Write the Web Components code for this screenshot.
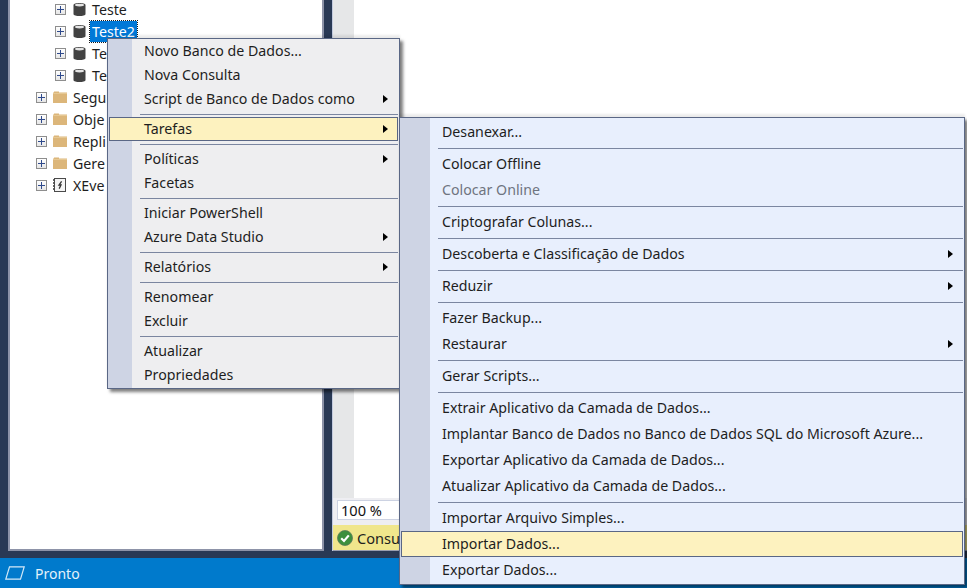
<!DOCTYPE html>
<html lang="pt-BR">
<head>
<meta charset="utf-8">
<title>SSMS</title>
<style>
  html, body { margin: 0; height: 100%; overflow: hidden; background: #293955; }
  body { font-family: "Noto Sans", "Open Sans", sans-serif; }
</style>
</head>
<body>
<ssms-app>
  <object-tree slot="tree">
    <tree-node level="2" icon="db">Teste</tree-node>
    <tree-node level="2" icon="db" selected>Teste2</tree-node>
    <tree-node level="2" icon="db">Te</tree-node>
    <tree-node level="2" icon="db">Te</tree-node>
    <tree-node level="1" icon="folder">Segu</tree-node>
    <tree-node level="1" icon="folder">Obje</tree-node>
    <tree-node level="1" icon="folder">Repli</tree-node>
    <tree-node level="1" icon="folder">Gere</tree-node>
    <tree-node level="1" icon="xevent">XEve</tree-node>
  </object-tree>
  <query-pane slot="pane"></query-pane>
  <status-bar slot="status">Pronto</status-bar>

  <context-menu slot="menus" style="left:107px;top:38px;width:293px" tone="gray">
    <menu-item>Novo Banco de Dados...</menu-item>
    <menu-item>Nova Consulta</menu-item>
    <menu-item arrow>Script de Banco de Dados como</menu-item>
    <menu-sep></menu-sep>
    <menu-item arrow active>Tarefas</menu-item>
    <menu-sep></menu-sep>
    <menu-item arrow>Políticas</menu-item>
    <menu-item>Facetas</menu-item>
    <menu-sep></menu-sep>
    <menu-item>Iniciar PowerShell</menu-item>
    <menu-item arrow>Azure Data Studio</menu-item>
    <menu-sep></menu-sep>
    <menu-item arrow>Relatórios</menu-item>
    <menu-sep></menu-sep>
    <menu-item>Renomear</menu-item>
    <menu-item>Excluir</menu-item>
    <menu-sep></menu-sep>
    <menu-item>Atualizar</menu-item>
    <menu-item>Propriedades</menu-item>
  </context-menu>

  <context-menu slot="menus" style="left:399px;top:117px;width:566px" tone="blue">
    <menu-item tall>Desanexar...</menu-item>
    <menu-sep></menu-sep>
    <menu-item tall>Colocar Offline</menu-item>
    <menu-item tall disabled>Colocar Online</menu-item>
    <menu-sep></menu-sep>
    <menu-item tall>Criptografar Colunas...</menu-item>
    <menu-sep></menu-sep>
    <menu-item tall arrow>Descoberta e Classificação de Dados</menu-item>
    <menu-sep></menu-sep>
    <menu-item tall arrow>Reduzir</menu-item>
    <menu-sep></menu-sep>
    <menu-item tall>Fazer Backup...</menu-item>
    <menu-item tall arrow>Restaurar</menu-item>
    <menu-sep></menu-sep>
    <menu-item tall>Gerar Scripts...</menu-item>
    <menu-sep></menu-sep>
    <menu-item tall>Extrair Aplicativo da Camada de Dados...</menu-item>
    <menu-item tall>Implantar Banco de Dados no Banco de Dados SQL do Microsoft Azure...</menu-item>
    <menu-item tall>Exportar Aplicativo da Camada de Dados...</menu-item>
    <menu-item tall>Atualizar Aplicativo da Camada de Dados...</menu-item>
    <menu-sep></menu-sep>
    <menu-item tall>Importar Arquivo Simples...</menu-item>
    <menu-item tall active>Importar Dados...</menu-item>
    <menu-item tall>Exportar Dados...</menu-item>
  </context-menu>
</ssms-app>

<script>
// Janela principal: painel da arvore, painel de consulta, barra de status
class SsmsApp extends HTMLElement {
    constructor() {
        super();
        this.attachShadow({ mode: "open" });
        this.shadowRoot.innerHTML = `
            <style>
                :host {
                    display: grid;
                    grid-template-rows: 558px 30px;
                    width: 967px;
                    height: 588px;
                    position: relative;
                    overflow: hidden;
                    background: #293955;
                }
                .work {
                    display: grid;
                    grid-template-columns: 316px 1fr;
                    column-gap: 8px;
                    padding: 0 0 7px 8px;
                    min-height: 0;
                }
            </style>
            <div class="work">
                <slot name="tree"></slot>
                <slot name="pane"></slot>
            </div>
            <slot name="status"></slot>
            <slot name="menus"></slot>
        `;
    }
}

class ObjectTree extends HTMLElement {
    constructor() {
        super();
        this.attachShadow({ mode: "open" });
        this.shadowRoot.innerHTML = `
            <style>
                :host {
                    display: block;
                    background: #fff;
                    border: 2px solid #8d93a8;
                    border-top: 0;
                    overflow: hidden;
                    box-sizing: border-box;
                }
                .list { margin-top: -2px; }
            </style>
            <div class="list"><slot></slot></div>
        `;
    }
}

const NODE_ICONS = {
    db: `<svg width="13" height="15" viewBox="0 0 13 15">
            <path d="M0.5 3 C0.5 0.3 12.5 0.3 12.5 3 V12 C12.5 14.8 0.5 14.8 0.5 12 Z" fill="#424242"/>
            <ellipse cx="6.5" cy="3.1" rx="4.6" ry="1.3" fill="#e4e4e4"/>
         </svg>`,
    folder: `<svg width="14" height="12" viewBox="0 0 14 12">
            <path d="M0 1.5 H1 V0.5 H6 V1.5 H14 V12 H0 Z" fill="#dcb67a"/>
            <path d="M0 2.5 H14" stroke="#e6c893" stroke-width="1"/>
         </svg>`,
    xevent: `<svg width="13" height="14" viewBox="0 0 13 14">
            <rect x="1.5" y="0.5" width="11" height="13" fill="#f4f4f4" stroke="#4a4a4a"/>
            <path d="M0 1 V13" stroke="#222" stroke-width="1.4" stroke-dasharray="2 1"/>
            <path d="M8.6 3.4 L6 7 H8 L6.2 10.6" fill="none" stroke="#333" stroke-width="1.3"/>
         </svg>`
};

class TreeNode extends HTMLElement {
    constructor() {
        super();
        this.attachShadow({ mode: "open" });
    }

    connectedCallback() {
        const level = Number(this.getAttribute("level") || 1);
        const icon = NODE_ICONS[this.getAttribute("icon")] || "";
        const selected = this.hasAttribute("selected");

        this.shadowRoot.innerHTML = `
            <style>
                :host {
                    display: block;
                    height: 22px;
                    font-size: 14.2px;
                    color: #1e1e1e;
                }
                .row {
                    display: flex;
                    align-items: center;
                    height: 22px;
                    white-space: nowrap;
                    padding-left: ${level === 2 ? 45 : 26}px;
                }
                .exp {
                    flex: none;
                    width: 11px;
                    height: 11px;
                    box-sizing: border-box;
                    border: 1px solid #8e8e8e;
                    background: linear-gradient(#fff, #e6e6e6);
                    display: grid;
                    place-items: center;
                    margin-right: ${level === 2 ? 7 : 6}px;
                }
                .icon { flex: none; display: flex; width: ${level === 2 ? 13 : 14}px; }
                .label {
                    margin-left: 4px;
                    padding: 0 2px;
                    line-height: 21px;
                    height: 21px;
                }
                .label.sel {
                    background: #0078d7;
                    color: #fff;
                    outline: 1px dotted #1a1a1a;
                    outline-offset: 0;
                }
            </style>
            <div class="row">
                <span class="exp"><svg width="7" height="7" viewBox="0 0 7 7"><path d="M0 3.5 H7 M3.5 0 V7" stroke="#2f4a8c" stroke-width="1"/></svg></span>
                <span class="icon">${icon}</span>
                <span class="label ${selected ? "sel" : ""}"><slot></slot></span>
            </div>
        `;
    }
}

class QueryPane extends HTMLElement {
    constructor() {
        super();
        this.attachShadow({ mode: "open" });
        this.shadowRoot.innerHTML = `
            <style>
                :host {
                    display: flex;
                    flex-direction: column;
                    border-left: 1px solid #c3cbdf;
                    background: #eeeef2;
                    min-height: 0;
                    color: #1e1e1e;
                }
                .editor { flex: 1; display: flex; min-height: 0; }
                .margin { width: 21px; background: #e6e7e8; }
                .text { flex: 1; background: #fff; }
                .zoom {
                    height: 27px;
                    box-sizing: border-box;
                    padding: 2px 0 5px 4px;
                    flex: none;
                    background: #eeeef2;
                }
                .combo {
                    display: block;
                    width: 100px;
                    height: 20px;
                    box-sizing: border-box;
                    border: 1px solid #ccd2e2;
                    background: #fff;
                    font-size: 14.6px;
                    line-height: 18px;
                    padding-left: 3px;
                    color: #111;
                }
                .result {
                    flex: none;
                    height: 26px;
                    box-sizing: border-box;
                    background: #f0e68c;
                    display: flex;
                    align-items: center;
                    gap: 4px;
                    padding-left: 4px;
                    font-size: 14.6px;
                    border-bottom: 1px solid #9a9fb0;
                }
            </style>
            <div class="editor"><div class="margin"></div><div class="text"></div></div>
            <div class="zoom"><span class="combo">100 %</span></div>
            <div class="result">
                <svg width="16" height="16" viewBox="0 0 16 16">
                    <circle cx="8" cy="8" r="7.5" fill="#3d8f3d" stroke="#5c7a5c" stroke-width="0.8"/>
                    <path d="M4.2 8.2 L7 11 L11.8 5.4" fill="none" stroke="#fff" stroke-width="2.2"/>
                </svg>
                <span>Consu</span>
            </div>
        `;
    }
}

class StatusBar extends HTMLElement {
    constructor() {
        super();
        this.attachShadow({ mode: "open" });
        this.shadowRoot.innerHTML = `
            <style>
                :host {
                    display: flex;
                    align-items: center;
                    gap: 10px;
                    padding-left: 5px;
                    background: #007acc;
                    color: #e4f2fb;
                    font-size: 14px;
                }
            </style>
            <svg width="20" height="14" viewBox="0 0 20 14">
                <path d="M4.5 0.8 H19.2 L15.5 13.2 H0.8 Z" fill="none" stroke="#d3e9f8" stroke-width="1.2"/>
            </svg>
            <span><slot></slot></span>
        `;
    }
}

class ContextMenu extends HTMLElement {
    constructor() {
        super();
        this.attachShadow({ mode: "open" });
    }

    connectedCallback() {
        const blue = this.getAttribute("tone") === "blue";
        const gutter = blue ? 30 : 24;

        this.shadowRoot.innerHTML = `
            <style>
                :host {
                    display: block;
                    position: absolute;
                    box-sizing: border-box;
                    border: 1px solid #5a6785;
                    background: linear-gradient(90deg, #ced4e4 ${gutter}px, ${blue ? "#e8effd" : "#eeeef0"} ${gutter}px);
                    box-shadow: 3px 3px 3px rgba(0, 0, 0, .5), 0 -3px 2px rgba(0, 0, 0, .08);
                    padding: ${blue ? "1px" : "0"} 0 1px;
                    --text-left: ${gutter + 12}px;
                }
            </style>
            <slot></slot>
        `;
    }
}

class MenuItem extends HTMLElement {
    constructor() {
        super();
        this.attachShadow({ mode: "open" });
    }

    connectedCallback() {
        const tall = this.hasAttribute("tall");
        const active = this.hasAttribute("active");
        const disabled = this.hasAttribute("disabled");
        const arrow = this.hasAttribute("arrow");

        this.shadowRoot.innerHTML = `
            <style>
                :host {
                    display: block;
                    height: ${tall ? 26 : 24}px;
                    font-size: 14.2px;
                    color: ${disabled ? "#6f7480" : "#1e1e1e"};
                }
                .row {
                    display: flex;
                    align-items: center;
                    justify-content: space-between;
                    height: 100%;
                    box-sizing: border-box;
                    padding-left: calc(var(--text-left) - ${active ? 2 : 0}px);
                    padding-right: ${active ? 9 : 11}px;
                    white-space: nowrap;
                    ${active ? "margin: 0 1px; border: 1px solid #5a6785; background: #fdf2bf;" : ""}
                }
                .text { margin-top: -2px; }
                .arrow {
                    flex: none;
                    width: 0;
                    height: 0;
                    border-left: 5px solid #000;
                    border-top: 4.5px solid transparent;
                    border-bottom: 4.5px solid transparent;
                }
            </style>
            <div class="row">
                <span class="text"><slot></slot></span>
                ${arrow ? `<span class="arrow"></span>` : ""}
            </div>
        `;
    }
}

class MenuSep extends HTMLElement {
    constructor() {
        super();
        this.attachShadow({ mode: "open" });
        this.shadowRoot.innerHTML = `
            <style>
                :host {
                    display: block;
                    height: 6px;
                    box-sizing: border-box;
                    padding: 3px 1px 2px calc(var(--text-left) - 4px);
                }
                div { height: 1px; background: #7b86a0; }
            </style>
            <div></div>
        `;
    }
}

customElements.define("ssms-app", SsmsApp);
customElements.define("object-tree", ObjectTree);
customElements.define("tree-node", TreeNode);
customElements.define("query-pane", QueryPane);
customElements.define("status-bar", StatusBar);
customElements.define("context-menu", ContextMenu);
customElements.define("menu-item", MenuItem);
customElements.define("menu-sep", MenuSep);
</script>
</body>
</html>
